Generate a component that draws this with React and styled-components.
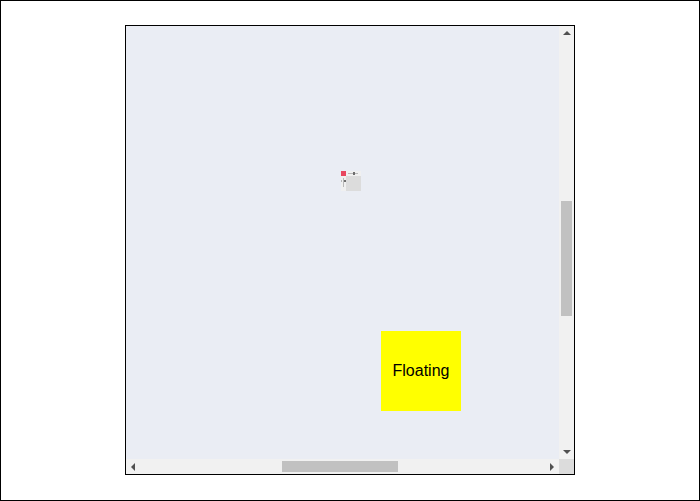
import React, { useLayoutEffect, useRef } from "react";
import styled, { createGlobalStyle } from "styled-components";

const Global = createGlobalStyle`
  html, body {
    margin: 0;
    padding: 0;
    background: #fff;
  }
  body {
    font-family: "Liberation Sans", Arial, sans-serif;
  }
`;

const Page = styled.div`
  box-sizing: border-box;
  width: 700px;
  height: 501px;
  border: 1px solid #000;
  display: flex;
  justify-content: center;
  padding-top: 24px;
`;

const Scroller = styled.div`
  box-sizing: border-box;
  width: 450px;
  height: 450px;
  border: 1px solid #000;
  display: grid;
  grid-template-columns: 1fr 15px;
  grid-template-rows: 1fr 15px;
  background: #eaedf4;
`;

const Viewport = styled.div`
  overflow: hidden;
`;

const Canvas = styled.div`
  position: relative;
  width: 1517px;
  height: 1517px;
`;

const Bar = styled.div`
  display: flex;
  flex-direction: ${(p) => (p.vertical ? "column" : "row")};
  background: #f1f1f1;
`;

const ArrowButton = styled.div`
  flex: 0 0 15px;
  display: flex;
  align-items: center;
  justify-content: center;
`;

const Arrow = styled.div`
  width: 0;
  height: 0;
  border: 4px solid transparent;
  ${(p) => p.dir === "up" && `border-bottom: 4px solid #505050; border-top-width: 0; margin-bottom: 1px;`}
  ${(p) => p.dir === "down" && `border-top: 4px solid #505050; border-bottom-width: 0; margin-top: 1px;`}
  ${(p) => p.dir === "left" && `border-right: 4px solid #505050; border-left-width: 0; margin-right: 1px;`}
  ${(p) => p.dir === "right" && `border-left: 4px solid #505050; border-right-width: 0; margin-left: 1px;`}
`;

const Track = styled.div`
  flex: 1;
  display: flex;
  flex-direction: ${(p) => (p.vertical ? "column" : "row")};
`;

const Thumb = styled.div`
  background: #c1c1c1;
  ${(p) =>
    p.vertical
      ? `margin: ${p.offset}px 2px 0 2px; height: ${p.size}px;`
      : `margin: 2px 0 2px ${p.offset}px; width: ${p.size}px;`}
`;

const Corner = styled.div`
  background: #dcdcdc;
`;

const Reference = styled.div`
  position: absolute;
  left: ${(p) => p.x}px;
  top: ${(p) => p.y}px;
  width: 20px;
  height: 20px;
  line-height: 0;
`;

const Floating = styled.div`
  position: absolute;
  left: ${(p) => p.x}px;
  top: ${(p) => p.y}px;
  width: 80px;
  height: 80px;
  background: #ffff00;
  color: #000;
  font-size: 16px;
  display: flex;
  align-items: center;
  justify-content: center;
`;

const MiniBox = () => (
  <svg width="20" height="20" viewBox="0 0 20 20">
    <rect x="0" y="0" width="20" height="20" fill="#f0f0f0" />
    <rect x="5" y="5" width="15" height="15" fill="#dcdcdc" />
    <rect x="0" y="0" width="5" height="5" fill="#e8475f" />
    <rect x="7" y="2" width="10" height="1" fill="#b8b8b8" />
    <rect x="12" y="1" width="2" height="3" fill="#6e6e6e" />
    <rect x="2" y="7" width="1" height="9" fill="#b8b8b8" />
    <rect x="3" y="9" width="2" height="2" fill="#6e6e6e" />
    <rect x="0" y="9" width="1" height="2" fill="#b8b8b8" />
  </svg>
);

const App = () => {
  const ref = useRef(null);

  useLayoutEffect(() => {
    if (ref.current) {
      ref.current.scrollTop = 602;
      ref.current.scrollLeft = 531;
    }
  }, []);

  return (
    <>
      <Global />
      <Page>
        <Scroller>
          <Viewport ref={ref}>
            <Canvas>
              <Reference x={746} y={747}>
                <MiniBox />
              </Reference>
              <Floating x={786} y={907}>Floating</Floating>
            </Canvas>
          </Viewport>
          <Bar vertical>
            <ArrowButton><Arrow dir="up" /></ArrowButton>
            <Track vertical>
              <Thumb vertical offset={160} size={115} />
            </Track>
            <ArrowButton><Arrow dir="down" /></ArrowButton>
          </Bar>
          <Bar>
            <ArrowButton><Arrow dir="left" /></ArrowButton>
            <Track>
              <Thumb offset={141} size={116} />
            </Track>
            <ArrowButton><Arrow dir="right" /></ArrowButton>
          </Bar>
          <Corner />
        </Scroller>
      </Page>
    </>
  );
};

export default App;
